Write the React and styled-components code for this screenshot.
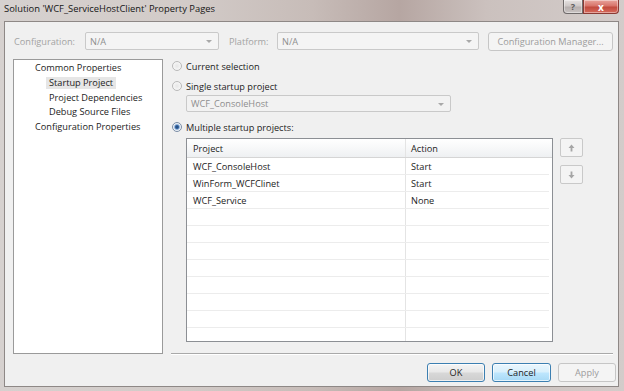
import React from 'react';
import styled, { createGlobalStyle } from 'styled-components';

const GlobalStyle = createGlobalStyle`
    html, body { margin: 0; padding: 0; background: #cfc8c6; }
    body { font-family: 'Open Sans', 'Noto Sans', 'Liberation Sans', sans-serif; }
`;

const uiFont = `'Open Sans', 'Noto Sans', 'Liberation Sans', sans-serif`;

const Window = styled.div`
    width: 624px;
    height: 391px;
    display: flex;
    flex-direction: column;
    overflow: hidden;
    background: linear-gradient(90deg, #d6d1cf 0%, #d2cbc8 30%, #c7bcb8 50%, #b6a6a2 64%, #cbc1be 78%, #d3ccca 100%);
    font-family: ${uiFont};
    font-size: 9.2px;
    color: #1c1c1c;
`;

const TitleBar = styled.div`
    height: 21px;
    flex: none;
    display: flex;
    align-items: flex-start;
    padding-left: 4px;
`;

const Title = styled.div`
    line-height: 18px;
    font-size: 9.4px;
    color: #161616;
`;

const CaptionButtons = styled.div`
    margin-left: auto;
    margin-right: 5px;
    display: flex;
    height: 14px;
`;

const CaptionButton = styled.div`
    width: ${p => p.$w}px;
    height: 14px;
    box-sizing: border-box;
    display: flex;
    align-items: center;
    justify-content: center;
    border: 1px solid ${p => p.$close ? '#8a3a34' : '#6f6a6a'};
    border-top: none;
    border-radius: ${p => p.$close ? '0 0 4px 0' : '0 0 0 4px'};
    background: ${p => p.$close
        ? 'linear-gradient(180deg, #e8a49c 0%, #d8746a 45%, #c24b3e 55%, #d66a5c 100%)'
        : 'linear-gradient(180deg, #e6e2e1 0%, #cfc9c8 45%, #b7b0af 55%, #c9c3c2 100%)'};
    color: ${p => p.$close ? '#ffffff' : '#5c5c5c'};
    font-weight: bold;
    font-size: ${p => p.$close ? 10 : 9}px;
    line-height: 1;
    box-shadow: inset 0 0 0 1px rgba(255, 255, 255, 0.4);
`;

const Client = styled.div`
    flex: 1;
    margin: 0 5px 4px 4px;
    background: #f0f0f0;
    border: 1px solid #8e8886;
    display: flex;
    flex-direction: column;
    min-height: 0;
`;

const TopRow = styled.div`
    display: flex;
    align-items: center;
    height: 18px;
    margin-top: 10px;
    padding-left: 9px;
`;

const FieldLabel = styled.div`
    width: ${p => p.$w}px;
    margin-left: ${p => p.$ml || 0}px;
    color: #a3a3a3;
    flex: none;
`;

const Combo = styled.div`
    position: relative;
    width: ${p => p.$w}px;
    height: ${p => p.$h || 18}px;
    box-sizing: border-box;
    border: 1px solid #c9c9c9;
    border-radius: 2px;
    background: #f4f4f4;
    color: #8e8e8e;
    display: flex;
    align-items: center;
    padding-left: 4px;
    flex: none;
`;

const ComboArrow = styled.span`
    position: absolute;
    right: 6px;
    top: 50%;
    margin-top: -1px;
    border-left: 3px solid transparent;
    border-right: 3px solid transparent;
    border-top: 3px solid #a8a8a8;
`;

const PushButton = styled.div`
    width: ${p => p.$w}px;
    height: ${p => p.$h || 19}px;
    margin-left: ${p => p.$ml || 0}px;
    box-sizing: border-box;
    display: flex;
    align-items: center;
    justify-content: center;
    border-radius: 3px;
    flex: none;
    border: 1px solid ${p => p.$variant ? '#3c7fb1' : '#c6c6c6'};
    background: ${p => p.$variant === 'default'
        ? 'linear-gradient(180deg, #f4f4f4 0%, #e8e8e8 48%, #d8d8d8 52%, #cdcdcd 100%)'
        : p.$variant === 'hover'
            ? 'linear-gradient(180deg, #eaf6fd 0%, #d9f0fc 48%, #bee6fd 52%, #a7d9f5 100%)'
            : '#f4f4f4'};
    color: ${p => p.$variant ? '#1c1c1c' : '#9c9c9c'};
    box-shadow: ${p => p.$variant ? 'inset 0 0 0 1px rgba(255,255,255,0.7)' : 'none'};
`;

const Body = styled.div`
    display: flex;
    margin-top: 9px;
    height: 295px;
    padding-left: 8px;
`;

const Tree = styled.div`
    width: 150px;
    box-sizing: border-box;
    border: 1px solid #9a9a9a;
    background: #ffffff;
    padding-top: 1px;
`;

const TreeItem = styled.div`
    height: 14.7px;
    display: flex;
    align-items: center;
    padding-left: ${p => p.$level === 2 ? 35 : 21}px;
`;

const TreeText = styled.span`
    padding: 0 3px;
    line-height: 12px;
    background: ${p => p.$selected ? '#e6e6e6' : 'transparent'};
    margin-left: -3px;
`;

const RightPane = styled.div`
    width: 442px;
    margin-left: 8px;
    display: flex;
    flex-direction: column;
    border-bottom: 1px solid #a9a9a9;
    box-shadow: 0 1px 0 #ffffff;
    box-sizing: border-box;
`;

const RadioRow = styled.div`
    display: flex;
    align-items: center;
    height: 14px;
    gap: 4px;
    padding-left: 1px;
    margin-top: ${p => p.$mt || 0}px;
`;

const Radio = styled.span`
    width: 10px;
    height: 10px;
    box-sizing: border-box;
    border-radius: 50%;
    border: 1px solid ${p => p.$checked ? '#7c8ea6' : '#b9b9b9'};
    background: ${p => p.$checked
        ? 'radial-gradient(circle, #1f3f6b 0%, #3a6aa6 30%, #9ab8dc 45%, #eef2f7 60%)'
        : 'radial-gradient(circle, #e6e6e6 0%, #f6f6f6 70%)'};
    flex: none;
`;

const RadioLabel = styled.span`
    color: #1c1c1c;
`;

const SubCombo = styled(Combo)`
    margin: 2px 0 0 15px;
    background: #f2f2f2;
`;

const GridArea = styled.div`
    display: flex;
    gap: 7px;
    margin: 4px 0 0 15px;
`;

const Grid = styled.div`
    width: 367px;
    height: 204px;
    box-sizing: border-box;
    border: 1px solid #8c8f94;
    background: #ffffff;
    overflow: hidden;
`;

const GridRow = styled.div`
    display: grid;
    grid-template-columns: 219px 1fr;
    height: ${p => p.$header ? 19 : 17}px;
    box-sizing: border-box;
    border-bottom: 1px solid ${p => p.$header ? '#d5d5d5' : '#ececec'};
    background: ${p => p.$header ? 'linear-gradient(180deg, #ffffff 0%, #f7f8f9 50%, #eef0f2 100%)' : '#ffffff'};
    margin-right: ${p => p.$header ? 0 : 3}px;
`;

const GridCell = styled.div`
    display: flex;
    align-items: center;
    padding-left: ${p => p.$first ? 6 : 5}px;
    border-right: ${p => p.$first ? '1px solid #e4e4e4' : 'none'};
    color: #1c1c1c;
    white-space: nowrap;
`;

const SideButtons = styled.div`
    display: flex;
    flex-direction: column;
    gap: 8px;
`;

const ArrowButton = styled.div`
    width: 23px;
    height: 19px;
    box-sizing: border-box;
    border: 1px solid #c9c9c9;
    border-radius: 2px;
    background: #f4f4f4;
    display: flex;
    align-items: center;
    justify-content: center;
`;

const Footer = styled.div`
    display: flex;
    justify-content: flex-end;
    gap: 7px;
    padding: 9px 2px 0 0;
`;

const ArrowIcon = ({ down }) => (
    <svg width="7" height="8" viewBox="0 0 7 8" style={{ transform: down ? 'rotate(180deg)' : 'none' }}>
        <path d="M3.5 0.5 L6.5 4 H4.4 V7.5 H2.6 V4 H0.5 Z" fill="#a6a6a6" />
    </svg>
);

const projects = [
    ['WCF_ConsoleHost', 'Start'],
    ['WinForm_WCFClinet', 'Start'],
    ['WCF_Service', 'None'],
];

const rows = [...projects, ...Array.from({ length: 9 }, () => ['', ''])];

export default function App() {
    return (
        <Window>
            <GlobalStyle />
            <TitleBar>
                <Title>Solution 'WCF_ServiceHostClient' Property Pages</Title>
                <CaptionButtons>
                    <CaptionButton $w={20}>?</CaptionButton>
                    <CaptionButton $w={36} $close>x</CaptionButton>
                </CaptionButtons>
            </TitleBar>
            <Client>
                <TopRow>
                    <FieldLabel $w={71}>Configuration:</FieldLabel>
                    <Combo $w={134}>N/A<ComboArrow /></Combo>
                    <FieldLabel $w={48} $ml={10}>Platform:</FieldLabel>
                    <Combo $w={202}>N/A<ComboArrow /></Combo>
                    <PushButton $w={125} $ml={9}>Configuration Manager...</PushButton>
                </TopRow>
                <Body>
                    <Tree>
                        <TreeItem><TreeText>Common Properties</TreeText></TreeItem>
                        <TreeItem $level={2}><TreeText $selected>Startup Project</TreeText></TreeItem>
                        <TreeItem $level={2}><TreeText>Project Dependencies</TreeText></TreeItem>
                        <TreeItem $level={2}><TreeText>Debug Source Files</TreeText></TreeItem>
                        <TreeItem><TreeText>Configuration Properties</TreeText></TreeItem>
                    </Tree>
                    <RightPane>
                        <RadioRow>
                            <Radio />
                            <RadioLabel>Current selection</RadioLabel>
                        </RadioRow>
                        <RadioRow $mt={6}>
                            <Radio />
                            <RadioLabel>Single startup project</RadioLabel>
                        </RadioRow>
                        <SubCombo $w={265} $h={17}>WCF_ConsoleHost<ComboArrow /></SubCombo>
                        <RadioRow $mt={8}>
                            <Radio $checked />
                            <RadioLabel>Multiple startup projects:</RadioLabel>
                        </RadioRow>
                        <GridArea>
                            <Grid>
                                <GridRow $header>
                                    <GridCell $first>Project</GridCell>
                                    <GridCell>Action</GridCell>
                                </GridRow>
                                {rows.map(([name, action], i) => (
                                    <GridRow key={i}>
                                        <GridCell $first>{name}</GridCell>
                                        <GridCell>{action}</GridCell>
                                    </GridRow>
                                ))}
                            </Grid>
                            <SideButtons>
                                <ArrowButton><ArrowIcon /></ArrowButton>
                                <ArrowButton><ArrowIcon down /></ArrowButton>
                            </SideButtons>
                        </GridArea>
                    </RightPane>
                </Body>
                <Footer>
                    <PushButton $w={58} $variant="default">OK</PushButton>
                    <PushButton $w={59} $variant="hover">Cancel</PushButton>
                    <PushButton $w={58}>Apply</PushButton>
                </Footer>
            </Client>
        </Window>
    );
}
